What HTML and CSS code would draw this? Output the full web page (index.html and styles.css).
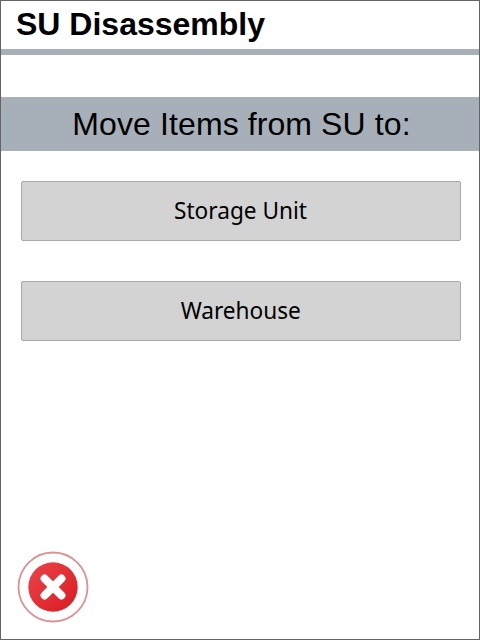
FILE: index.html
```html
<!DOCTYPE html>
<html lang="en">
<head>
<meta charset="utf-8">
<title>SU Disassembly</title>
<link rel="stylesheet" href="styles.css">
</head>
<body>
<main class="screen">
  <header class="title-bar"><h1>SU Disassembly</h1></header>
  <h2 class="prompt">Move Items from SU to:</h2>
  <div class="actions">
    <button class="option"><span>Storage Unit</span></button>
    <button class="option"><span>Warehouse</span></button>
  </div>
  <footer class="footer">
    <button class="cancel" aria-label="Cancel">
      <svg width="72" height="72" viewBox="0 0 72 72">
        <defs><linearGradient id="red" x1="0" y1="0" x2="1" y2="1"><stop offset="0.15" stop-color="#e83e44"/><stop offset="0.9" stop-color="#dc1f25"/></linearGradient></defs>
        <circle cx="36" cy="36" r="34.5" fill="#fff" stroke="#df9092" stroke-width="1.8"/>
        <circle cx="36" cy="36" r="24.7" fill="url(#red)"/>
        <path d="M27.6 27.6 44.4 44.4M44.4 27.6 27.6 44.4" fill="none" stroke="#fff" stroke-width="8" stroke-linecap="round"/>
      </svg>
    </button>
  </footer>
</main>
</body>
</html>
```
FILE: styles.css
```css
* { box-sizing: border-box; }
body { margin: 0; background: #fff; color: #000; font-family: "Liberation Sans", Arial, sans-serif; }
.screen { width: 480px; height: 640px; border: 1px solid #646464; display: flex; flex-direction: column; }
.title-bar { height: 54px; padding-left: 15px; border-bottom: 6px solid #a7b0b7; }
h1 { margin: 0; font-size: 32px; line-height: 46px; font-weight: 700; white-space: nowrap; }
.prompt { margin: 42px 0 0; height: 54px; background: #a7b0b8; font-size: 32px; line-height: 54px; font-weight: 400; letter-spacing: 0.1px; text-align: center; white-space: nowrap; padding-left: 3px; }
.actions { display: flex; flex-direction: column; gap: 40px; padding: 30px 18px 0 20px; }
.option { height: 60px; padding: 0 0 4px; border: 1px solid #a8a8a8; border-radius: 2px; background: #d3d3d3; color: #000; font-family: "Noto Sans", sans-serif; font-size: 24px; }
.option span { display: inline-block; white-space: nowrap; transform: scaleX(0.943); }
.footer { margin-top: auto; padding: 0 0 16px 16px; }
.cancel { display: block; padding: 0; border: 0; background: none; }
.cancel svg { display: block; }
```
